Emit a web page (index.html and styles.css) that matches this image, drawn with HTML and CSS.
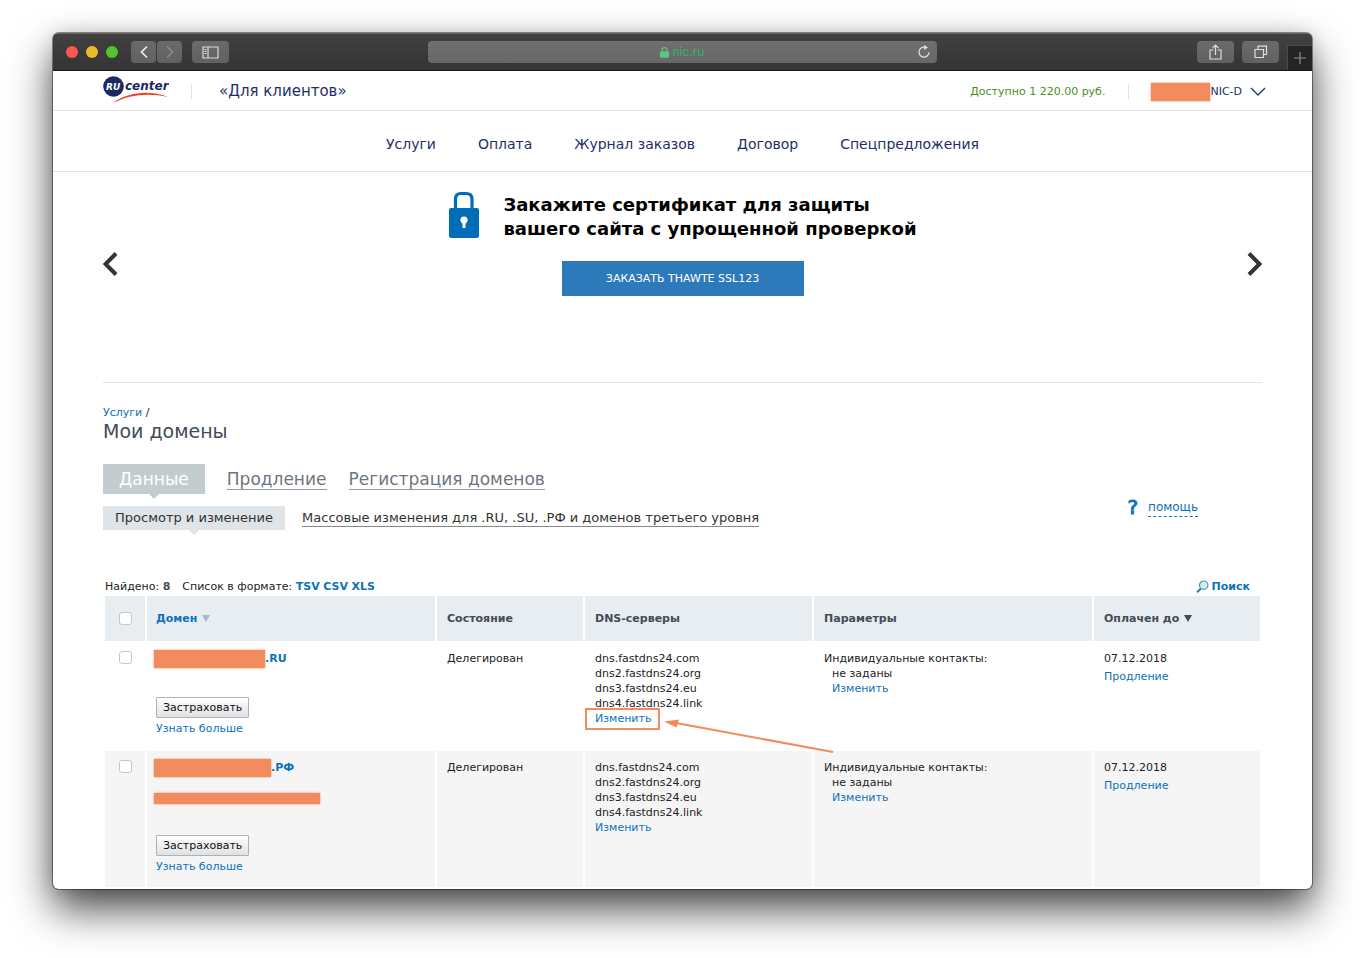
FILE: index.html
```html
<!DOCTYPE html>
<html lang="ru">
<head>
<meta charset="utf-8">
<title>Мои домены</title>
<link rel="stylesheet" href="styles.css">
</head>
<body>
<div class="window">
  <div class="toolbar">
    <div class="lights"><span class="light red"></span><span class="light yellow"></span><span class="light green"></span></div>
    <div class="history">
      <button class="tool" aria-label="Назад"><svg width="10" height="14" viewBox="0 0 10 14"><path d="M8 1.500 2.500 7 8 12.500" stroke="#eee" stroke-width="1.700"/></svg></button>
      <button class="tool" aria-label="Вперёд"><svg width="10" height="14" viewBox="0 0 10 14"><path d="M2 1.500 7.500 7 2 12.500" stroke="#8b8b8b" stroke-width="1.500"/></svg></button>
    </div>
    <button class="tool wide" aria-label="Боковая панель"><svg width="17" height="13" viewBox="0 0 17 13"><path d="M1 1h15v11H1zM6 1v11M2.500 3.500h2M2.500 5.500h2M2.500 7.500h2" stroke="#ddd" stroke-width="1.200"/></svg></button>
    <div class="address">
      <span class="site"><svg width="9" height="11" viewBox="0 0 9 11"><path d="M2 5V3.200a2.500 2.500 0 0 1 5 0V5" stroke="#5cc583" stroke-width="1.200"/><rect y="4.500" width="9" height="6.200" rx="1" fill="#5cc583"/></svg>nic.ru</span>
      <button class="reload" aria-label="Обновить"><svg width="14" height="14" viewBox="0 0 14 14"><path d="M7.500 2.200A5 5 0 1 0 12 7.300" stroke="#ddd" stroke-width="1.300"/><path d="M7 0l4 2.500L7 5z" fill="#ddd"/></svg></button>
    </div>
    <div class="actions">
      <button class="tool wide" aria-label="Поделиться"><svg width="13" height="16" viewBox="0 0 13 16"><path d="M4.500 6H1v9h11V6H8.500M6.500 11V1.500M3.500 4.200l3-3 3 3" stroke="#ddd" stroke-width="1.200"/></svg></button>
      <button class="tool wide" aria-label="Вкладки"><svg width="14" height="14" viewBox="0 0 14 14"><path d="M1 4.500h8.500V12.500H1zM4 4V1.200h8.500V9.500H10" stroke="#ddd" stroke-width="1.200"/></svg></button>
    </div>
    <button class="newtab" aria-label="Новая вкладка"><svg width="12" height="12" viewBox="0 0 12 12"><path d="M6 0v12M0 6h12" stroke="#8e8e8e" stroke-width="1.200"/></svg></button>
  </div>

  <header class="top">
    <svg class="logo" width="66" height="28" viewBox="0 0 66 28"><circle cx="10.500" cy="10.500" r="10.300" fill="#1c2a63"/><text x="3" y="14" class="logo-ru">RU</text><text x="22" y="14" class="logo-center">center</text><path d="M10 27C24 16.500 46 13.500 65 21 46 16.500 26 18.500 10 27z" fill="#ee4323"/></svg>
    <span class="divider"></span>
    <span class="audience">«Для клиентов»</span>
    <span class="balance">Доступно 1 220.00 руб.</span>
    <span class="divider"></span>
    <button class="account"><span class="mask mask-account"></span>NIC-D<svg width="16" height="9" viewBox="0 0 16 9"><path d="M1 1l7 7 7-7" stroke="#243572" stroke-width="1.300"/></svg></button>
  </header>

  <nav class="menu">
    <a href="#">Услуги</a><a href="#">Оплата</a><a href="#">Журнал заказов</a><a href="#">Договор</a><a href="#">Спецпредложения</a>
  </nav>

  <main class="content">
    <section class="slider">
      <button class="arrow" aria-label="Предыдущий"><svg width="17" height="28" viewBox="0 0 17 28"><path d="M13 3.500 2.500 14 13 24.500" stroke="#333" stroke-width="4"/></svg></button>
      <div class="slide">
        <div class="pitch">
          <svg width="32" height="48" viewBox="0 0 32 48"><path d="M7.500 19V8q0-5.500 5.500-5.500h5Q24 2.500 24 8v11" stroke="#006db6" stroke-width="3.200"/><rect x="1" y="17" width="30" height="30" rx="2" fill="#006db6"/><circle cx="16" cy="29" r="3.600" fill="#fff"/><path d="M14.500 30h3v7h-3z" fill="#fff"/></svg>
          <h2>Закажите сертификат для защиты<br>вашего сайта с упрощенной проверкой</h2>
        </div>
        <button class="order">ЗАКАЗАТЬ THAWTE SSL123</button>
      </div>
      <button class="arrow" aria-label="Следующий"><svg width="17" height="28" viewBox="0 0 17 28"><path d="M4 3.500 14.500 14 4 24.500" stroke="#333" stroke-width="4"/></svg></button>
    </section>

    <div class="crumbs"><a href="#">Услуги</a> /</div>
    <h1>Мои домены</h1>

    <div class="sections">
      <div>
        <div class="tabs"><a class="tab current" href="#">Данные</a><a class="tab" href="#">Продление</a><a class="tab" href="#">Регистрация доменов</a></div>
        <div class="subtabs"><a class="subtab current" href="#">Просмотр и изменение</a><a class="subtab" href="#">Массовые изменения для .RU, .SU, .РФ и доменов третьего уровня</a></div>
      </div>
      <div class="help"><span>?</span><a href="#">помощь</a></div>
    </div>

    <div class="listing">
      <div class="summary">
        <span>Найдено: <b>8</b></span>
        <span>Список в формате: <a href="#">TSV</a> <a href="#">CSV</a> <a href="#">XLS</a></span>
        <a class="search" href="#"><svg width="13" height="13" viewBox="0 0 13 13"><path d="M5 8.500 1 12.300" stroke="#3c7896" stroke-width="2"/><circle cx="7.700" cy="5.200" r="4.200" fill="#d5edf5" stroke="#5292ae" stroke-width="1.200"/></svg>Поиск</a>
      </div>
      <table>
        <colgroup><col class="c-check"><col><col class="c-state"><col class="c-dns"><col class="c-params"><col class="c-paid"></colgroup>
        <thead>
          <tr>
            <th><input type="checkbox" aria-label="Выбрать все"></th>
            <th><a class="sort" href="#">Домен <span class="down muted"></span></a></th>
            <th>Состояние</th><th>DNS-серверы</th><th>Параметры</th>
            <th><span class="sort">Оплачен до <span class="down"></span></span></th>
          </tr>
        </thead>
        <tbody>
          <tr>
            <td><input type="checkbox" aria-label="Выбрать домен .RU"></td>
            <td>
              <div class="domain"><span class="mask mask-ru"></span><a href="#">.RU</a></div>
              <div class="insure"><button>Застраховать</button><a href="#">Узнать больше</a></div>
            </td>
            <td>Делегирован</td>
            <td>dns.fastdns24.com<br>dns2.fastdns24.org<br>dns3.fastdns24.eu<br>dns4.fastdns24.link<br>
              <span class="marked"><a href="#">Изменить</a><svg class="pointer" width="170" height="36" viewBox="0 0 170 36"><path d="M12 5 169 34" stroke="#f28b5e" stroke-width="2"/><path d="M0 3.500 15 1.500 12.500 9.500z" fill="#f28b5e"/></svg></span></td>
            <td>Индивидуальные контакты:<div class="indent">не заданы<br><a href="#">Изменить</a></div></td>
            <td>07.12.2018<div class="renew"><a href="#">Продление</a></div></td>
          </tr>
          <tr>
            <td><input type="checkbox" aria-label="Выбрать домен .РФ"></td>
            <td>
              <div class="domain"><span class="mask mask-rf"></span><a href="#">.РФ</a></div>
              <div class="alias"><span class="mask mask-alias"></span></div>
              <div class="insure"><button>Застраховать</button><a href="#">Узнать больше</a></div>
            </td>
            <td>Делегирован</td>
            <td>dns.fastdns24.com<br>dns2.fastdns24.org<br>dns3.fastdns24.eu<br>dns4.fastdns24.link<br><a href="#">Изменить</a></td>
            <td>Индивидуальные контакты:<div class="indent">не заданы<br><a href="#">Изменить</a></div></td>
            <td>07.12.2018<div class="renew"><a href="#">Продление</a></div></td>
          </tr>
        </tbody>
      </table>
    </div>
  </main>
</div>
</body>
</html>
```
FILE: styles.css
```css
* { box-sizing: border-box; }
body {
  margin: 0;
  padding: 33px 53px 69px;
  background: #fff;
  color: #222;
  font: 11px/15px "DejaVu Sans", Verdana, sans-serif;
}
svg { display: block; fill: none; flex: none; }
button { font: inherit; margin: 0; padding: 0; border: 0; background: none; color: inherit; }
a { color: #0b72bd; text-decoration: none; }
.window {
  border-radius: 6px;
  background: #fff;
  padding-bottom: 2px;
  box-shadow: 0 0 0 1px rgba(0,0,0,.42), 0 20px 42px rgba(0,0,0,.72), 0 0 18px rgba(0,0,0,.12);
}

/* browser toolbar */
.toolbar {
  display: flex;
  align-items: center;
  height: 38px;
  padding-left: 13px;
  border-radius: 5px 5px 0 0;
  border-top: 1px solid #666;
  border-bottom: 1px solid #181818;
  background: linear-gradient(#414141, #343434);
}
.lights { display: flex; gap: 8px; margin-right: 13px; }
.light { width: 12px; height: 12px; border-radius: 50%; }
.red { background: #fc5650; }
.yellow { background: #e8bd2c; }
.green { background: #53c22c; }
.history { display: flex; gap: 1px; margin-right: 10px; }
.tool {
  display: flex;
  align-items: center;
  justify-content: center;
  width: 25px;
  height: 22px;
  border-radius: 4px;
  background: linear-gradient(#6a6a6a, #616161);
}
.tool.wide { width: 37px; }
.address {
  display: flex;
  align-items: center;
  flex: 0 1 509px;
  height: 22px;
  margin-left: 199px;
  padding: 0 6px;
  border-radius: 4px;
  background: linear-gradient(#707070, #676767);
}
.site {
  display: flex;
  align-items: center;
  justify-content: center;
  gap: 4px;
  flex: 1;
  padding-left: 13px;
  color: #2fb573;
  font: 12px/16px Inter, sans-serif;
}
.actions { display: flex; gap: 8px; margin-left: auto; margin-right: 8px; }
.newtab {
  display: flex;
  align-items: center;
  justify-content: center;
  align-self: flex-end;
  width: 25px;
  height: 25px;
  border: solid #4b4b4b;
  border-width: 1px 0 0 1px;
  background: #242424;
}

/* site header */
.top {
  display: flex;
  align-items: center;
  height: 40px;
  padding: 2px 46px 0 50px;
  border-bottom: 1px solid #e3e3e3;
  color: #1f2e66;
}
.logo { margin-bottom: 3px; }
.logo-ru, .logo-center { font-family: "DejaVu Sans", sans-serif; font-weight: 700; font-style: italic; }
.logo-ru { font-size: 9px; fill: #fff; }
.logo-center { font-size: 12px; fill: #1c2a63; }
.divider { width: 1px; height: 15px; background: #e2e2e2; }
.logo + .divider { margin: 0 27px 0 22px; }
.audience { font-size: 15px; }
.balance { margin-left: auto; margin-right: 23px; color: #4b8f1c; }
.account { display: flex; align-items: center; margin-left: 22px; }
.account svg { margin-left: 8px; }
.mask { display: inline-block; background: #f28b5e; box-shadow: 0 0 2px #f28b5e; }
.mask-account { width: 59px; height: 18px; }
.menu {
  display: flex;
  justify-content: center;
  gap: 42px;
  padding: 24px 0 18px;
  border-bottom: 1px solid #e3e3e3;
  font-size: 14px;
  line-height: 18px;
}
.menu a { color: #1f2e66; }

/* promo */
.content { padding: 0 50px; }
.slider {
  display: flex;
  justify-content: space-between;
  align-items: flex-start;
  height: 211px;
  border-bottom: 1px solid #e3e3e3;
}
.arrow { margin-top: 78px; }
.slide { display: flex; flex-direction: column; align-items: center; padding-top: 19px; }
.pitch { display: flex; gap: 23px; }
h2 { margin: 2px 0 0; color: #000; font-size: 18px; line-height: 24px; }
.order {
  width: 242px;
  height: 35px;
  margin-top: 20px;
  background: #2c7ab9;
  color: #fff;
}

/* page title and tabs */
.crumbs { margin-top: 22px; }
h1 { margin: 0; color: #444c57; font-size: 19px; line-height: 22px; font-weight: 400; }
.sections { display: flex; justify-content: space-between; margin-top: 22px; }
.tabs, .subtabs { display: flex; align-items: flex-start; }
.tabs { gap: 22px; font-size: 17px; line-height: 20px; }
.subtabs { gap: 17px; margin-top: 12px; font-size: 13px; line-height: 16px; }
.tab { margin-top: 5px; color: #6d7680; border-bottom: 1px solid #949a9f; }
.subtab { margin-top: 4px; color: #333; border-bottom: 1px solid #888; }
.current { position: relative; margin-top: 0; border: 0; }
.tab.current { padding: 5px 16px; background: #c3cdd0; color: #fff; }
.subtab.current { padding: 4px 12px; background: #dee4e7; }
.current::after {
  content: "";
  position: absolute;
  top: 100%;
  left: 50%;
  margin-left: -5px;
  border: 5px solid transparent;
  border-top-color: #c3cdd0;
  border-bottom: 0;
}
.subtab.current::after { border-top-color: #dee4e7; }
.help { display: flex; align-items: center; gap: 10px; margin: 32px 64px 0 0; height: 22px; font-size: 12px; }
.help span { color: #0b72bd; font-size: 20px; -webkit-text-stroke: 1px #0b72bd; }
.help a { border-bottom: 1px dashed #0b72bd; line-height: 18px; }

/* domain list */
.listing { margin: 49px 2px 0; }
.summary { display: flex; gap: 12px; padding-bottom: 2px; }
.summary b { color: #444c57; }
.summary a { font-weight: 700; }
.summary .search { display: flex; align-items: center; gap: 3px; margin-left: auto; margin-right: 10px; }
table { width: 100%; table-layout: fixed; border-collapse: collapse; }
.c-check { width: 41px; }
.c-state { width: 148px; }
.c-dns { width: 229px; }
.c-params { width: 280px; }
.c-paid { width: 167px; }
th, td { padding: 10px 10px 0; text-align: left; vertical-align: top; border-left: 2px solid #fff; }
th:first-child, td:first-child { padding-left: 14px; border-left: 0; }
th { height: 45px; padding: 0 10px; vertical-align: middle; background: #e7edf0; color: #444c57; }
tbody tr { height: 110px; }
tbody tr:nth-child(even) { height: 136px; background: #f5f5f5; }
tbody tr:nth-child(even) td { padding-top: 9px; }
th:nth-child(2), td:nth-child(2) { padding-left: 9px; }
input {
  appearance: none;
  display: block;
  width: 13px;
  height: 13px;
  margin: 0;
  border: 1px solid #c6c6c6;
  border-radius: 3px;
  background: #fff;
}
.sort { display: flex; align-items: center; gap: 5px; }
.down { border: 4px solid transparent; border-top: 7px solid #444c57; border-bottom: 0; }
.down.muted { border-top-color: #a5bcc6; }
.domain { display: flex; align-items: center; height: 15px; margin-left: -2px; font-weight: 700; }
.mask-ru { width: 111px; height: 18px; }
.mask-rf { width: 117px; height: 18px; }
.alias { display: flex; margin: 18px 0 0 -2px; }
.mask-alias { width: 166px; height: 11px; }
.insure { display: flex; flex-direction: column; align-items: flex-start; gap: 3px; margin-top: 31px; }
.insure button {
  padding: 2px 6px;
  border: 1px solid #aeb2b7;
  border-radius: 1px;
  background: linear-gradient(#fff, #dfe1e4);
  color: #111;
}
.marked { position: relative; }
.marked::before {
  content: "";
  position: absolute;
  inset: -4px -9px -5px -10px;
  border: 2px solid #f28b5e;
}
.pointer { position: absolute; left: 69px; top: 6px; }
.indent { padding-left: 8px; }
.renew { margin-top: 3px; }
```
